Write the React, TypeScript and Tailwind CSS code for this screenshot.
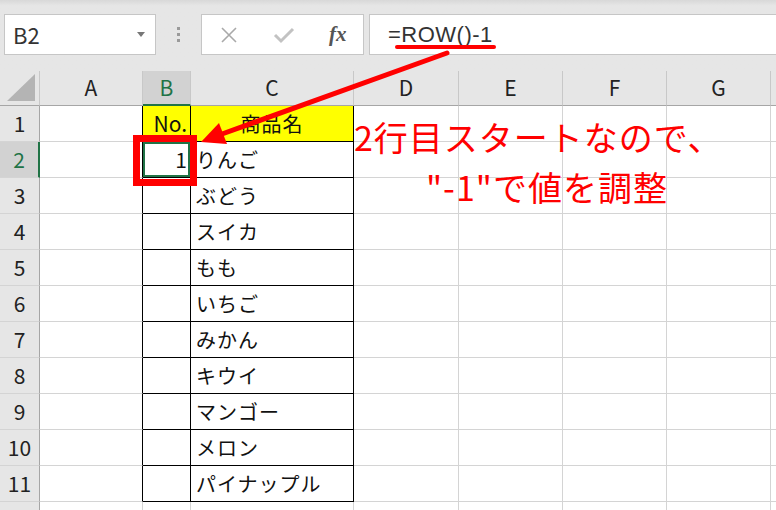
import React from "react";

const items = ["りんご", "ぶどう", "スイカ", "もも", "いちご", "みかん", "キウイ", "マンゴー", "メロン", "パイナップル"];
const cols = ["A", "B", "C", "D", "E", "F", "G"];

const grid = "grid grid-cols-[40px_103px_48px_163px_105px_104px_104px_104px_5px]";
const jp = { fontFamily: '"Noto Sans CJK JP", "Noto Sans", sans-serif' };

const Toolbar = () => (
  <div className="h-[71px] bg-[#e6e6e6] bg-gradient-to-b from-[#d8d8d8] via-[#e6e6e6] via-[8%] to-[#e6e6e6]">
    <div className="flex pt-[14px] pl-[4px] h-[55px]">
      <div className="w-[152px] h-[41px] bg-white border border-[#c6c6c6] flex items-center pl-[8px] pr-[10px]">
        <span className="flex-1 text-[22px] text-[#333]" style={{ fontFamily: '"Noto Sans CJK JP", sans-serif' }}>
          B2
        </span>
        <span className="w-0 h-0 border-l-[4px] border-r-[4px] border-t-[5px] border-l-transparent border-r-transparent border-t-[#777]" />
      </div>
      <div className="w-[45px] flex flex-col items-center justify-center gap-[3px]">
        <span className="w-[3px] h-[3px] bg-[#9a9a9a]" />
        <span className="w-[3px] h-[3px] bg-[#9a9a9a]" />
        <span className="w-[3px] h-[3px] bg-[#9a9a9a]" />
      </div>
      <div className="w-[163px] h-[41px] bg-white border border-[#c6c6c6] flex items-center">
        <svg width="20" height="20" viewBox="0 0 20 20" className="ml-[17px]">
          <path d="M3 3 L17 17 M17 3 L3 17" stroke="#a9a9a9" strokeWidth="1.6" fill="none" />
        </svg>
        <svg width="22" height="20" viewBox="0 0 22 20" className="ml-[34px]">
          <path d="M2 10 L8 16 L20 4" stroke="#c2c2c2" strokeWidth="3" fill="none" />
        </svg>
        <span
          className="ml-[34px] text-[21px] italic font-bold text-[#555] leading-none"
          style={{ fontFamily: '"Liberation Serif", serif' }}
        >
          fx
        </span>
      </div>
      <div className="ml-[5px] flex-1 h-[41px] bg-white border border-[#c6c6c6] border-r-0 flex items-center pl-[18px]">
        <span className="text-[22px] text-[#333] tracking-[0.5px]" style={{ fontFamily: '"Liberation Sans", sans-serif' }}>
          =ROW()-1
        </span>
      </div>
    </div>
  </div>
);

const Header = () => (
  <div className={grid + " h-[35px] bg-[#e6e6e6]"}>
    <div className="relative border-r border-b border-r-[#c8c8c8] border-b-[#a6a6a6]">
      <svg width="28" height="27" viewBox="0 0 28 27" className="absolute right-[4px] bottom-[4px]">
        <polygon points="28,0 28,27 0,27" fill="#b4b4b4" />
      </svg>
    </div>
    {cols.map((c) =>
      c === "B" ? (
        <div
          key={c}
          className="flex items-center justify-center bg-[#d2d2d2] border-r border-r-[#c8c8c8] border-b-2 border-b-[#217346] text-[21px] text-[#217346]"
          style={jp}
        >
          {c}
        </div>
      ) : (
        <div
          key={c}
          className="flex items-center justify-center border-r border-b border-r-[#c8c8c8] border-b-[#a6a6a6] text-[21px] text-[#222]"
          style={jp}
        >
          {c}
        </div>
      )
    )}
    <div className="border-b border-b-[#a6a6a6]" />
  </div>
);

const Row = ({ n }: { n: number }) => {
  const sel = n === 2;
  const inTable = n <= 11;
  const name = n === 1 ? "商品名" : items[n - 2];
  return (
    <div className={grid + " h-[36px] bg-white"} style={jp}>
      <div
        className={
          sel
            ? "flex items-center justify-center bg-[#d2d2d2] border-r-2 border-b border-r-[#217346] border-b-[#d4d4d4] text-[21px] text-[#217346]"
            : "flex items-center justify-center bg-[#e6e6e6] border-r border-b border-r-[#a6a6a6] border-b-[#d4d4d4] text-[21px] text-[#222]"
        }
      >
        {inTable ? n : ""}
      </div>
      <div className={"border-r border-b border-b-[#d4d4d4] " + (inTable ? "border-r-black" : "border-r-[#d4d4d4]")} />
      {inTable ? (
        <div
          className={
            "flex items-center justify-end pr-[3px] border-r border-b border-black text-[21px] text-[#111] " +
            (n === 1 ? "bg-[#ffff00]" : "") +
            (sel ? " shadow-[inset_0_0_0_2px_#217346]" : "")
          }
        >
          {n === 1 ? "No." : sel ? "1" : ""}
        </div>
      ) : (
        <div className="border-r border-b border-[#d4d4d4]" />
      )}
      {inTable ? (
        <div
          className={
            "flex items-center border-r border-b border-black text-[20px] tracking-[1px] text-[#111] " +
            (n === 1 ? "bg-[#ffff00] justify-center" : "pl-[5px]")
          }
        >
          {name}
        </div>
      ) : (
        <div className="border-r border-b border-[#d4d4d4]" />
      )}
      <div className="border-r border-b border-[#d4d4d4]" />
      <div className="border-r border-b border-[#d4d4d4]" />
      <div className="border-r border-b border-[#d4d4d4]" />
      <div className="border-r border-b border-[#d4d4d4]" />
      <div className="border-b border-[#d4d4d4]" />
    </div>
  );
};

export default function App() {
  return (
    <div className="relative w-[776px] h-[510px] overflow-hidden bg-white">
      <Toolbar />
      <Header />
      {Array.from({ length: 12 }, (_, i) => (
        <Row key={i} n={i + 1} />
      ))}

      {/* annotation overlay */}
      <div className="absolute left-[133px] top-[135px] w-[64px] h-[51px] border-[7px] border-[#ff0000]" />
      <svg className="absolute left-0 top-0" width="776" height="510" viewBox="0 0 776 510">
        <line x1="397" y1="47" x2="494" y2="47" stroke="#ff0000" strokeWidth="4" strokeLinecap="round" />
        <line x1="447" y1="53" x2="222" y2="134" stroke="#ff0000" strokeWidth="5" strokeLinecap="round" />
        <polygon points="201,142 227,144 219,123" fill="#ff0000" />
      </svg>
      <div
        className="absolute left-[354px] top-[112px] text-[34px] leading-[50px] tracking-[1px] text-[#ff0000] whitespace-nowrap"
        style={jp}
      >
        <div>2行目スタートなので、</div>
        <div className="pl-[72px]">"-1"で値を調整</div>
      </div>
    </div>
  );
}
